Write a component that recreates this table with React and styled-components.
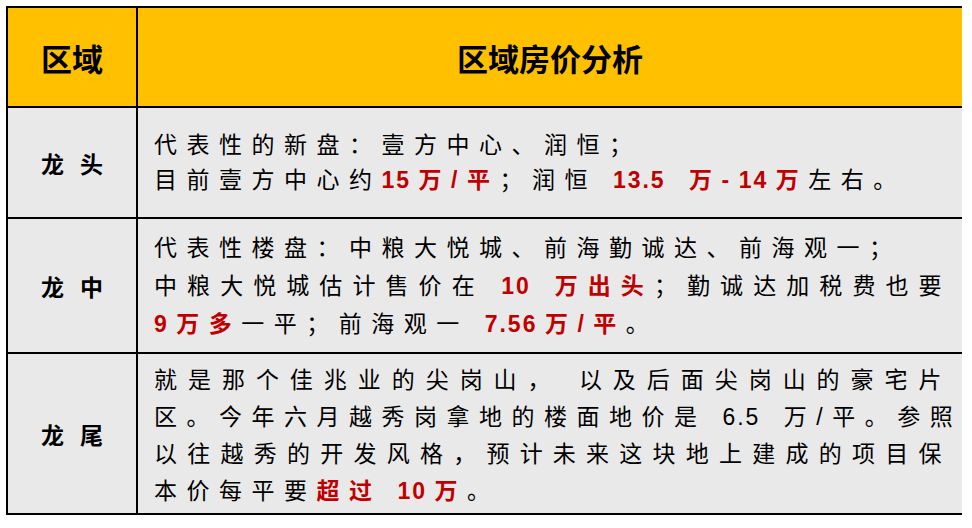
import styled, { createGlobalStyle } from 'styled-components'

const GlobalStyle = createGlobalStyle`
  html, body { margin: 0; padding: 0; background: #fff; }
  body {
    font-family: "Liberation Sans", "Noto Sans CJK SC", sans-serif;
    color: #000;
  }
`

const Page = styled.div`
  padding: 6px 8px 0 6px;
`

const Grid = styled.div`
  display: grid;
  grid-template-columns: 128px 824px;
  grid-template-rows: 98px 109px 133px 159px;
  gap: 2px;
  width: 952px;
  background: #000;
  border: 2px solid #000;
`

const HeadCell = styled.div`
  background: #ffc000;
  display: flex;
  align-items: center;
  justify-content: center;
  font-size: 31px;
  font-weight: 700;
`

const LabelCell = styled.div`
  background: #e9e9e9;
  display: flex;
  align-items: center;
  justify-content: center;
  font-size: 23px;
  font-weight: 700;
  letter-spacing: 16px;
  padding-left: 16px;
`

const BodyCell = styled.div`
  background: #e9e9e9;
  display: flex;
  flex-direction: column;
  justify-content: center;
  padding: ${({ $shift }) => $shift || 0}px 11px 0 16px;
  font-size: 23px;
  letter-spacing: 9.5px;
  line-height: ${({ $lh }) => $lh || 37}px;
`

const Line = styled.div`
  white-space: nowrap;
  text-align: ${({ $justify }) => ($justify ? 'justify' : 'left')};
  text-align-last: ${({ $justify }) => ($justify ? 'justify' : 'auto')};
`

const Red = styled.span`
  color: #c00000;
  font-weight: 700;
`

// digits sit tight together, then the usual gap after the last one
const Num = styled.span`
  letter-spacing: 2px;
  margin-right: 7.5px;
`

const rows = [
  {
    label: '龙头',
    lh: 35,
    lines: [
      { text: <>代表性的新盘：壹方中心、润恒；</> },
      {
        text: (
          <>
            目前壹方中心约<Red><Num>15</Num>万/平</Red>；润恒 <Red><Num>13.5</Num> 万-<Num>14</Num>万</Red>左右。
          </>
        ),
      },
    ],
  },
  {
    label: '龙中',
    lh: 38,
    lines: [
      { text: <>代表性楼盘：中粮大悦城、前海勤诚达、前海观一；</> },
      {
        justify: true,
        text: (
          <>
            中粮大悦城估计售价在 <Red><Num>10</Num> 万出头</Red>；勤诚达加税费也要
          </>
        ),
      },
      {
        text: (
          <>
            <Red><Num>9</Num>万多</Red>一平；前海观一 <Red><Num>7.56</Num>万/平</Red>。
          </>
        ),
      },
    ],
  },
  {
    label: '龙尾',
    lh: 37,
    shift: 4,
    lines: [
      { justify: true, text: <>就是那个佳兆业的尖岗山， 以及后面尖岗山的豪宅片</> },
      { justify: true, text: <>区。今年六月越秀岗拿地的楼面地价是 <Num>6.5</Num> 万/平。参照</> },
      { justify: true, text: <>以往越秀的开发风格，预计未来这块地上建成的项目保</> },
      {
        text: (
          <>
            本价每平要<Red>超过 <Num>10</Num>万</Red>。
          </>
        ),
      },
    ],
  },
]

export default function App() {
  return (
    <>
      <GlobalStyle />
      <Page>
        <Grid>
          <HeadCell>区域</HeadCell>
          <HeadCell>区域房价分析</HeadCell>
          {rows.map((row) => [
            <LabelCell key={row.label + '-l'}>{row.label}</LabelCell>,
            <BodyCell key={row.label + '-b'} $lh={row.lh} $shift={row.shift}>
              {row.lines.map((line, i) => (
                <Line key={i} $justify={line.justify}>
                  {line.text}
                </Line>
              ))}
            </BodyCell>,
          ])}
        </Grid>
      </Page>
    </>
  )
}
